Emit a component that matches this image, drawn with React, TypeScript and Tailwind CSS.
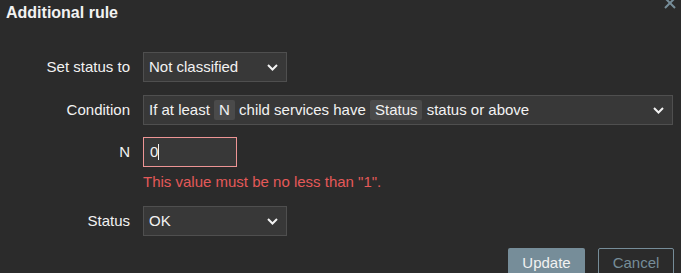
import { ReactNode } from 'react';

function Chevron() {
  return (
    <svg width="11" height="7" viewBox="0 0 11 7" className="shrink-0">
      <polyline points="1,1 5.5,5.5 10,1" fill="none" stroke="#f2f2f2" strokeWidth="2" />
    </svg>
  );
}

function Row({ label, children }: { label: string; children: ReactNode }) {
  return (
    <div className="flex items-center gap-[13px]">
      <div className="w-[130px] text-right">{label}</div>
      {children}
    </div>
  );
}

function FakeSelect({ width, children }: { width: string; children: ReactNode }) {
  return (
    <div
      className={`${width} h-[30px] flex items-center justify-between pl-[5px] pr-[8px] bg-[#383838] border border-[#4f4f4f]`}
    >
      <div className="flex items-center whitespace-pre">{children}</div>
      <Chevron />
    </div>
  );
}

function Tag({ text }: { text: string }) {
  return <span className="inline-block h-[20px] leading-[20px] px-[5px] rounded-[2px] bg-[#4a4a4a]">{text}</span>;
}

export default function App() {
  return (
    <div className="relative w-[681px] h-[273px] overflow-hidden bg-[#2b2b2b] text-[#f2f2f2] text-[15px] leading-[18px] font-['Liberation_Sans',Arial,sans-serif]">
      {/* Header */}
      <h4 className="pt-[3px] pl-[6px] text-[16px] leading-[20px] font-bold">Additional rule</h4>
      <button className="absolute right-[5px] top-[-3px] w-[12px] h-[12px]">
        <svg width="12" height="12" viewBox="0 0 12 12">
          <path d="M1 1 L11 11 M11 1 L1 11" stroke="#768d99" strokeWidth="2" />
        </svg>
      </button>

      {/* Form */}
      <div className="mt-[29px] flex flex-col">
        <Row label="Set status to">
          <FakeSelect width="w-[144px]">Not classified</FakeSelect>
        </Row>
        <div className="mt-[13px]">
          <Row label="Condition">
            <FakeSelect width="w-[530px]">
              {'If at least '}
              <Tag text="N" />
              {' child services have '}
              <Tag text="Status" />
              {' status or above'}
            </FakeSelect>
          </Row>
        </div>
        <div className="mt-[12px]">
          <Row label="N">
            <div className="w-[94px] h-[30px] flex items-center pl-[6px] bg-[#383838] border border-[#ee9595]">
              <span>0</span>
              <span className="w-px h-[16px] bg-[#f2f2f2]" />
            </div>
          </Row>
        </div>
        <div className="mt-[6px] pl-[143px] text-[#e45959]">This value must be no less than "1".</div>
        <div className="mt-[15px]">
          <Row label="Status">
            <FakeSelect width="w-[144px]">OK</FakeSelect>
          </Row>
        </div>
      </div>

      {/* Footer */}
      <div className="mt-[12px] flex justify-end gap-[13px] pr-[7px]">
        <button className="w-[77px] h-[30px] rounded-[2px] bg-[#768d99] text-[#f2f2f2]">Update</button>
        <button className="w-[76px] h-[30px] rounded-[2px] border border-[#768d99] text-[#768d99]">Cancel</button>
      </div>
    </div>
  );
}
